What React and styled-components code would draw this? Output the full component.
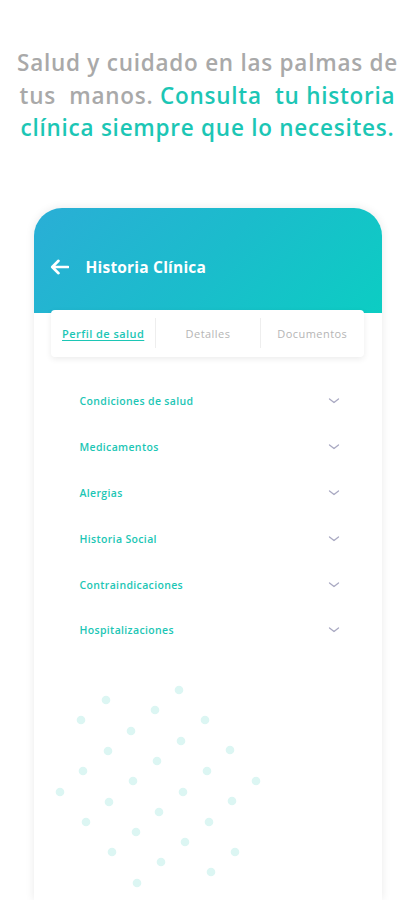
import React from 'react';
import styled, { createGlobalStyle } from 'styled-components';

const GlobalStyle = createGlobalStyle`
  html, body {
    margin: 0;
    padding: 0;
    background: #ffffff;
    height: 900px;
    overflow: hidden;
  }
  body {
    font-family: "Open Sans", "Noto Sans", sans-serif;
  }
`;

const Page = styled.div`
  width: 415px;
  height: 900px;
  overflow: hidden;
  display: flex;
  flex-direction: column;
  align-items: center;
`;

const Headline = styled.h1`
  margin: 47px 0 0;
  font-size: 22.5px;
  line-height: 32.5px;
  font-weight: 600;
  text-align: center;
  letter-spacing: 0.75px;
  color: #a9a9a9;
  white-space: pre;
`;

const Accent = styled.span`
  color: #1cc6b5;
`;

const Phone = styled.div`
  margin-top: 63px;
  width: 348px;
  flex: 1;
  background: #ffffff;
  border-radius: 28px 28px 0 0;
  box-shadow: 0 0 10px rgba(0, 0, 0, 0.09);
  display: flex;
  flex-direction: column;
  align-items: center;
`;

const Header = styled.div`
  width: 100%;
  height: 105px;
  box-sizing: border-box;
  padding: 14px 16px 0;
  border-radius: 28px 28px 0 0;
  background: linear-gradient(135deg, #2aaed6 0%, #1bbccc 50%, #0ccdc3 100%);
  display: flex;
  align-items: center;
  gap: 17px;
`;

const Title = styled.span`
  color: #ffffff;
  font-size: 15.5px;
  font-weight: 700;
  letter-spacing: 0.2px;
`;

const Tabs = styled.div`
  margin-top: -3px;
  width: 313px;
  height: 47px;
  background: #ffffff;
  border-radius: 4px;
  box-shadow: 0 2px 6px rgba(0, 0, 0, 0.08);
  display: grid;
  grid-template-columns: 1fr 1fr 1fr;
  align-items: center;
`;

const Tab = styled.div`
  text-align: center;
  font-size: 11px;
  letter-spacing: 0.45px;
  padding-top: 2px;
  color: ${p => (p.$active ? '#1cc6b5' : '#b5b5b5')};
  font-weight: ${p => (p.$active ? 600 : 400)};
  text-decoration: ${p => (p.$active ? 'underline' : 'none')};
  text-underline-offset: 2px;
  border-left: ${p => (p.$first ? 'none' : '1px solid #eeeeee')};
  line-height: 28px;
`;

const List = styled.div`
  width: 100%;
  box-sizing: border-box;
  padding: 22px 42px 0 46px;
  display: flex;
  flex-direction: column;
`;

const Row = styled.div`
  height: 45.8px;
  display: flex;
  align-items: center;
  justify-content: space-between;
`;

const RowLabel = styled.span`
  font-size: 10.5px;
  font-weight: 600;
  letter-spacing: 0.35px;
  color: #1cc6b5;
`;

const Dots = styled.svg`
  align-self: flex-start;
  margin-top: 30px;
  margin-left: 20px;
`;

const items = [
  'Condiciones de salud',
  'Medicamentos',
  'Alergias',
  'Historia Social',
  'Contraindicaciones',
  'Hospitalizaciones',
];

const dotPoints = [
  [179, 689], [106, 699], [155, 709], [81, 719], [205, 719], [131, 730],
  [181, 740], [108, 750], [230, 749], [157, 760], [83, 770], [207, 770],
  [133, 780], [256, 780], [60, 791], [183, 791], [109, 801], [232, 800],
  [159, 811], [86, 821], [209, 821], [136, 831], [185, 841], [112, 851],
  [235, 851], [161, 861], [211, 871], [137, 882],
];

const Chevron = () => (
  <svg width="12" height="8" viewBox="0 0 12 8">
    <path d="M1.5 2 L6 5.5 L10.5 2" fill="none" stroke="#a9a9c2" strokeWidth="1.3" strokeLinecap="round" strokeLinejoin="round" />
  </svg>
);

const BackArrow = () => (
  <svg width="19" height="16" viewBox="0 0 19 16">
    <path d="M18 8 H2.5 M8.5 1.8 L2.2 8 L8.5 14.2" fill="none" stroke="#ffffff" strokeWidth="2.6" strokeLinecap="round" strokeLinejoin="round" />
  </svg>
);

const App = () => (
  <Page>
    <GlobalStyle />
    <Headline>
      {'Salud y cuidado en las palmas de\ntus  manos. '}
      <Accent>{'Consulta  tu historia\nclínica siempre que lo necesites.'}</Accent>
    </Headline>
    <Phone>
      <Header>
        <BackArrow />
        <Title>Historia Clínica</Title>
      </Header>
      <Tabs>
        <Tab $active $first>Perfil de salud</Tab>
        <Tab>Detalles</Tab>
        <Tab>Documentos</Tab>
      </Tabs>
      <List>
        {items.map(label => (
          <Row key={label}>
            <RowLabel>{label}</RowLabel>
            <Chevron />
          </Row>
        ))}
      </List>
      <Dots width="210" height="210" viewBox="54 682 210 210">
        {dotPoints.map(([x, y], i) => (
          <circle key={i} cx={x} cy={y} r="4.3" fill="#dcf6f3" />
        ))}
      </Dots>
    </Phone>
  </Page>
);

export default App;
